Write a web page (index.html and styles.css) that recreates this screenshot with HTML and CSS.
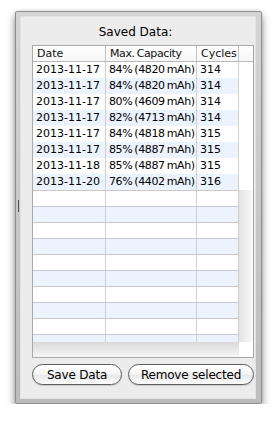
FILE: index.html
```html
<!DOCTYPE html>
<html lang="en">
<head>
    <meta charset="UTF-8">
    <meta name="viewport" content="width=device-width, initial-scale=1.0">
    <title>Saved Data</title>
    <link rel="stylesheet" href="styles.css">
</head>
<body>
    <div class="window">
        <div class="panel">
            <h1 class="title">Saved Data:</h1>
            <div class="table">
                <div class="row head">
                    <div class="cell">Date</div>
                    <div class="cell cap">Max. Capacity</div>
                    <div class="cell">Cycles</div>
                    <div class="cell"></div>
                </div>
                <div class="rows">
                    <div class="row"><div class="cell">2013-11-17</div><div class="cell cap">84% (4820 mAh)</div><div class="cell">314</div><div class="cell"></div></div>
                    <div class="row"><div class="cell">2013-11-17</div><div class="cell cap">84% (4820 mAh)</div><div class="cell">314</div><div class="cell"></div></div>
                    <div class="row"><div class="cell">2013-11-17</div><div class="cell cap">80% (4609 mAh)</div><div class="cell">314</div><div class="cell"></div></div>
                    <div class="row"><div class="cell">2013-11-17</div><div class="cell cap">82% (4713 mAh)</div><div class="cell">314</div><div class="cell"></div></div>
                    <div class="row"><div class="cell">2013-11-17</div><div class="cell cap">84% (4818 mAh)</div><div class="cell">315</div><div class="cell"></div></div>
                    <div class="row"><div class="cell">2013-11-17</div><div class="cell cap">85% (4887 mAh)</div><div class="cell">315</div><div class="cell"></div></div>
                    <div class="row"><div class="cell">2013-11-18</div><div class="cell cap">85% (4887 mAh)</div><div class="cell">315</div><div class="cell"></div></div>
                    <div class="row"><div class="cell">2013-11-20</div><div class="cell cap">76% (4402 mAh)</div><div class="cell">316</div><div class="cell"></div></div>
                </div>
                <div class="filler">
                    <div class="empty-rows">
                        <div class="empty"><i></i><i></i><i></i></div>
                        <div class="empty"><i></i><i></i><i></i></div>
                        <div class="empty"><i></i><i></i><i></i></div>
                        <div class="empty"><i></i><i></i><i></i></div>
                        <div class="empty"><i></i><i></i><i></i></div>
                        <div class="empty"><i></i><i></i><i></i></div>
                        <div class="empty"><i></i><i></i><i></i></div>
                        <div class="empty"><i></i><i></i><i></i></div>
                        <div class="empty"><i></i><i></i><i></i></div>
                        <div class="empty"><i></i><i></i><i></i></div>
                    </div>
                    <div class="shade-right"></div>
                    <div class="shade-bottom"></div>
                    <div class="corner"></div>
                </div>
            </div>
            <div class="buttons">
                <button class="btn btn-save">Save Data</button>
                <button class="btn btn-remove">Remove selected</button>
            </div>
        </div>
    </div>
</body>
</html>
```

FILE: styles.css
```css
* {
    margin: 0;
    padding: 0;
    box-sizing: border-box;
    font-family: 'DejaVu Sans', 'Liberation Sans', sans-serif;
}
body {
    background: #fff;
}
.window {
    position: relative;
    width: 247px;
    height: 393px;
    margin: 11px 0 0 15px;
    padding: 4px 5px 4px 4px;
    border: 1px solid #8f8f8f;
    border-radius: 2px;
    background: linear-gradient(#d4d4d4, #bcbcbc);
    box-shadow: 0 5px 9px rgba(0, 0, 0, 0.45), 0 0 3px rgba(0, 0, 0, 0.15);
}
/* little grip mark on the left edge */
.window::before {
    content: '';
    position: absolute;
    left: 2px;
    top: 188px;
    width: 1px;
    height: 12px;
    background: #555;
}
.panel {
    height: 100%;
    display: flex;
    flex-direction: column;
    padding: 0 2px 0 12px;
    background: #ececec;
    box-shadow: inset 0 0 0 1px #e2e2e2;
}
.title {
    height: 29px;
    margin-left: -12px;
    padding: 5px 3px 0 0;
    text-align: center;
    font-size: 12px;
    font-weight: normal;
    line-height: 23px;
    color: #000;
}
.table {
    height: 313px;
    border: 1px solid #a9a9a9;
    background: #fff;
    font-size: 11px;
    color: #000;
}
.row {
    display: grid;
    grid-template-columns: 73px 91px 42px 14px;
    height: 16px;
    line-height: 16px;
}
.row .cell {
    padding-left: 3px;
    white-space: nowrap;
    overflow: hidden;
    border-right: 1px solid #cfcfcf;
}
.row .cell:last-child {
    border-right: none;
    background: #fff;
}
.row .cap {
    letter-spacing: -0.4px;
    word-spacing: -1px;
}
.head {
    line-height: 15px;
    border-bottom: 1px solid #b9b9b9;
    background: linear-gradient(#fff, #f6f6f6);
    color: #111;
}
.head .cell {
    padding-left: 4px;
    border-right-color: #c4c4c4;
}
.head .cell:last-child {
    background: none;
}
.rows .row:nth-child(even) {
    background: #edf3fe;
}
.filler {
    display: grid;
    grid-template-columns: 206px 14px;
    grid-template-rows: 152px 15px;
}
.empty-rows {
    overflow: hidden;
}
.empty {
    display: grid;
    grid-template-columns: 73px 91px 42px;
    height: 16px;
    border-top: 1px solid #c9c9c9;
}
.empty:nth-child(even) {
    background: #edf3fe;
}
.empty i {
    border-right: 1px solid #cfcfcf;
}
.shade-right {
    background: linear-gradient(to right, #e3e3e3, #f9f9f9);
}
.shade-bottom {
    background: linear-gradient(#d9d9d9, #f6f6f6);
}
.corner {
    background: #fff;
}
.buttons {
    display: flex;
    gap: 6px;
    margin-top: 6px;
}
.btn {
    height: 21px;
    border: 1px solid #5e5e5e;
    border-radius: 11px;
    background: linear-gradient(#ffffff 0%, #f6f6f6 45%, #e9e9e9 55%, #fbfbfb 100%);
    box-shadow: 0 1px 1px rgba(0, 0, 0, 0.15);
    font-size: 12px;
    letter-spacing: -0.2px;
    color: #000;
    cursor: pointer;
}
.btn-save {
    width: 90px;
}
.btn-remove {
    width: 126px;
}
```
